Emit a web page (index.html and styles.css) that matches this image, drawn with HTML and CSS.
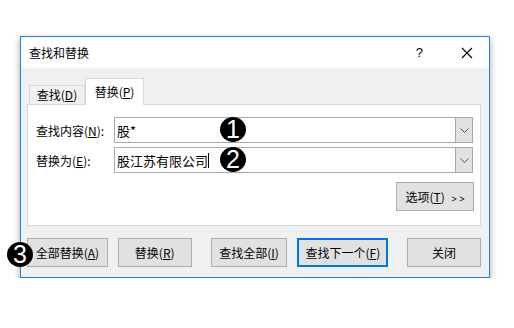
FILE: index.html
```html
<!DOCTYPE html>
<html lang="zh-CN">
<head>
    <meta charset="UTF-8">
    <title>查找和替换</title>
    <link rel="stylesheet" href="styles.css">
</head>
<body>
    <div class="dialog">
        <div class="titlebar">
            <span class="title">查找和替换</span>
            <span class="help">?</span>
            <svg class="close" width="12" height="12" viewBox="0 0 12 12">
                <path d="M1 1 L11 11 M11 1 L1 11" stroke="#000" stroke-width="1.1" fill="none"/>
            </svg>
        </div>

        <div class="body">
            <div class="tabs">
                <div class="tab">查找(<u>D</u>)</div>
                <div class="tab active">替换(<u>P</u>)</div>
            </div>

            <div class="panel">
                <div class="row">
                    <label class="label">查找内容(<u>N</u>):</label>
                    <div class="combo">
                        <span class="value">股*</span>
                        <span class="drop"><svg width="9" height="5" viewBox="0 0 9 5"><path d="M0.5 0.5 L4.5 4.5 L8.5 0.5" stroke="#555" fill="none"/></svg></span>
                    </div>
                </div>
                <div class="row">
                    <label class="label">替换为(<u>E</u>):</label>
                    <div class="combo">
                        <span class="value">股江苏有限公司<span class="caret"></span></span>
                        <span class="drop"><svg width="9" height="5" viewBox="0 0 9 5"><path d="M0.5 0.5 L4.5 4.5 L8.5 0.5" stroke="#555" fill="none"/></svg></span>
                    </div>
                </div>
                <div class="options-row">
                    <button class="btn options">选项(<u>T</u>) <span class="arrows">&gt; &gt;</span></button>
                </div>
                <span class="badge b1">1</span>
                <span class="badge b2">2</span>
            </div>

            <div class="actions">
                <button class="btn w81">全部替换(<u>A</u>)</button>
                <button class="btn w74">替换(<u>R</u>)</button>
                <button class="btn w77">查找全部(<u>I</u>)</button>
                <button class="btn w91 default">查找下一个(<u>F</u>)</button>
                <button class="btn w74 close-btn">关闭</button>
            </div>
        </div>
        <span class="badge b3">3</span>
    </div>
</body>
</html>
```

FILE: styles.css
```css
body {
    margin: 0;
    background-color: #fff;
    font-family: "Noto Sans CJK SC", "Noto Sans", sans-serif;
    font-size: 12px;
    color: #000;
}
.dialog {
    position: relative;
    width: 468px;
    margin: 36px 0 0 20px;
    border: 1px solid #1b84d8;
    background-color: #f0f0f0;
    box-shadow: 0 3px 7px rgba(0, 0, 0, 0.35);
}
.titlebar {
    display: flex;
    align-items: center;
    height: 31px;
    padding-left: 8px;
    background-color: #fff;
}
.title {
    flex: 1;
}
.help {
    font-family: "Liberation Sans", sans-serif;
    font-size: 13px;
    margin-right: 38px;
}
.close {
    margin-right: 16px;
}
.body {
    padding: 10px 8px 10px 6px;
}
.tabs {
    display: flex;
    align-items: flex-end;
    height: 26px;
    padding-left: 2px;
}
.tab {
    height: 19px;
    line-height: 18px;
    width: 56px;
    border: 1px solid #d9d9d9;
    border-bottom: none;
    background-color: #f0f0f0;
    box-sizing: border-box;
    text-align: center;
    white-space: nowrap;
}
.tab.active {
    height: 27px;
    line-height: 25px;
    width: 59px;
    background-color: #fff;
    margin-bottom: -1px;
    position: relative;
    z-index: 1;
}
.panel {
    position: relative;
    height: 122px;
    border: 1px solid #d9d9d9;
    background-color: #fff;
    padding: 12px 6px 0 8px;
    box-sizing: border-box;
}
.row {
    display: flex;
    align-items: center;
    margin-bottom: 4px;
}
.label {
    width: 78px;
}
.combo {
    display: flex;
    width: 359px;
    height: 26px;
    border: 1px solid #a9a9a9;
    box-sizing: border-box;
}
.value {
    flex: 1;
    display: flex;
    align-items: center;
    padding-left: 2px;
    font-size: 13px;
}
.caret {
    display: inline-block;
    width: 1px;
    height: 15px;
    background-color: #000;
}
.drop {
    display: flex;
    align-items: center;
    justify-content: center;
    width: 16px;
    border-left: 1px solid #a9a9a9;
    background-color: #e1e1e1;
}
.options-row {
    display: flex;
    justify-content: flex-end;
    margin-top: 9px;
}
.btn {
    height: 29px;
    border: 1px solid #adadad;
    background-color: #e1e1e1;
    font-family: inherit;
    font-size: 12px;
    color: #000;
    padding: 0;
}
.options {
    width: 78px;
}
.arrows {
    font-family: "Liberation Sans", sans-serif;
    font-size: 9px;
    margin-left: 4px;
}
.actions {
    display: flex;
    margin-top: 12px;
}
.w81 { width: 81px; }
.w74 { width: 74px; margin-left: 10px; }
.w77 { width: 77px; margin-left: 19px; }
.w91 { width: 91px; margin-left: 10px; }
.close-btn { margin-left: 19px; }
.btn.default {
    border: 2px solid #0078d7;
}
.badge {
    position: absolute;
    width: 26px;
    height: 25px;
    border-radius: 50%;
    background-color: #000;
    color: #fff;
    font-family: "Liberation Sans", sans-serif;
    font-size: 25px;
    line-height: 25px;
    text-align: center;
}
.b1 { left: 192px; top: 12px; }
.b2 { left: 192px; top: 42px; }
.b3 { left: -14px; top: 205px; }
```
